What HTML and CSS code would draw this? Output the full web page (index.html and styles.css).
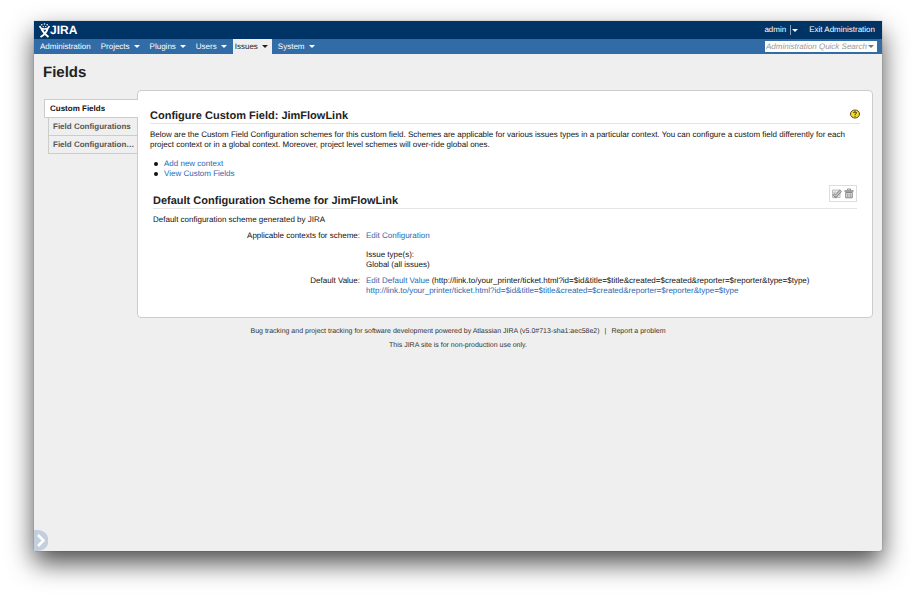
FILE: index.html
```html
<!DOCTYPE html>
<html lang="en">
<head>
<meta charset="utf-8">
<title>Configure Custom Field - JIRA</title>
<link rel="stylesheet" href="styles.css">
</head>
<body>
<div class="window">
  <header>
    <div class="topbar">
      <a class="logo" href="#" aria-label="JIRA">
        <svg class="logo-mark" viewBox="0 0 11 15" aria-hidden="true">
          <g fill="#fff"><circle cx="2.800" cy="1.800" r=".8"/><circle cx="5.500" cy="1" r=".8"/><circle cx="8.200" cy="1.800" r=".8"/><circle cx="4.300" cy="3.600" r=".7"/><circle cx="6.700" cy="3.600" r=".7"/></g>
          <g fill="none" stroke="#fff"><path stroke-width="1.600" d="M.8 2.800C1.200 5.300 3 6 5.500 6S9.800 5.300 10.200 2.800"/><path stroke-width="2" d="M2.500 6C4 9 6 11.500 9.500 14M8.500 6C7.500 9 5 12 1.500 14"/></g>
        </svg>
        <span>JIRA</span>
      </a>
      <div class="user">
        <a href="#">admin</a>
        <button class="user-menu" aria-label="User menu"><i class="caret"></i></button>
        <a class="exit" href="#">Exit Administration</a>
      </div>
    </div>
    <nav class="menu">
      <a href="#">Administration</a>
      <a href="#">Projects <i class="caret"></i></a>
      <a href="#">Plugins <i class="caret"></i></a>
      <a href="#">Users <i class="caret"></i></a>
      <a class="current" href="#">Issues <i class="caret"></i></a>
      <a href="#">System <i class="caret"></i></a>
      <div class="search">
        <input type="text" placeholder="Administration Quick Search" aria-label="Administration Quick Search">
        <i class="caret"></i>
      </div>
    </nav>
  </header>
  <h1>Fields</h1>
  <div class="columns">
    <nav class="tabs">
      <a class="active" href="#">Custom Fields</a>
      <a href="#">Field Configurations</a>
      <a href="#">Field Configuration…</a>
    </nav>
    <main>
      <div class="heading">
        <h2>Configure Custom Field: JimFlowLink</h2>
        <a class="help" href="#" aria-label="Help">
          <svg viewBox="0 0 10 10" aria-hidden="true"><ellipse cx="5" cy="5" rx="4.500" ry="4" fill="#f5dc2c" stroke="#55471c"/><path d="M3.500 4C3.500 2.500 6.500 2.500 6.500 4C6.500 4.800 5 4.800 5 6M5 6.700V7.700" fill="none" stroke="#2c2508"/></svg>
        </a>
      </div>
      <p>Below are the Custom Field Configuration schemes for this custom field. Schemes are applicable for various issues types in a particular context. You can configure a custom field differently for each project context or in a global context. Moreover, project level schemes will over-ride global ones.</p>
      <ul>
        <li><a href="#">Add new context</a></li>
        <li><a href="#">View Custom Fields</a></li>
      </ul>
      <section>
        <div class="heading">
          <h2>Default Configuration Scheme for JimFlowLink</h2>
          <div class="tools">
            <button aria-label="Edit scheme"><svg viewBox="0 0 10 10" aria-hidden="true"><path d="M.5 1.500H8V9H.5Z" fill="#eee" stroke="#bbb"/><path d="M1 4H8M1 6.500H8M3 2V9M5.500 2V9" stroke="#bbb" stroke-width=".6"/><path d="M1.500 5.500L3.500 8L9 2" fill="none" stroke="#888" stroke-width="2.600"/><path d="M2 6L3.500 7.700L8.700 2.300" fill="none" stroke="#eee"/></svg></button>
            <button aria-label="Delete scheme"><svg viewBox="0 0 10 10" aria-hidden="true"><path d="M3.500 1.500V.5H6.500V1.500" fill="none" stroke="#888"/><path d="M.5 2.500H9.500" stroke="#777" stroke-width="1.400"/><path d="M1.700 4H8.300V9.300H1.700Z" fill="#ddd" stroke="#888"/><path d="M3.500 5V8.500M5 5V8.500M6.500 5V8.500" stroke="#888" stroke-width=".6"/></svg></button>
          </div>
        </div>
        <p>Default configuration scheme generated by JIRA</p>
        <dl>
          <dt>Applicable contexts for scheme:</dt>
          <dd><a href="#">Edit Configuration</a>
            <div class="types">Issue type(s):<br>Global (all issues)</div></dd>
          <dt>Default Value:</dt>
          <dd><a href="#">Edit Default Value</a> (http://link.to/your_printer/ticket.html?id=$id&amp;title=$title&amp;created=$created&amp;reporter=$reporter&amp;type=$type)<br>
            <a href="#">http://link.to/your_printer/ticket.html?id=$id&amp;title=$title&amp;created=$created&amp;reporter=$reporter&amp;type=$type</a></dd>
        </dl>
      </section>
    </main>
  </div>
  <footer>
    <div>Bug tracking and project tracking for software development powered by Atlassian JIRA (v5.0#713-sha1:aec58e2)<span class="bar">|</span><a href="#">Report a problem</a></div>
    <div>This JIRA site is for non-production use only.</div>
  </footer>
  <button class="expand" aria-label="Expand"><svg viewBox="0 0 14 21" aria-hidden="true"><path d="M0 0H4A10.500 10.500 0 0 1 4 21H0Z" fill="#c3cfdd"/><path d="M4 5L9.500 10.500L4 16" fill="none" stroke="#fff" stroke-width="2.500"/></svg></button>
</div>
</body>
</html>
```

FILE: styles.css
```css
* { box-sizing: border-box; }

body {
  margin: 0;
  min-height: 100vh;
  padding: 21px 34px 47px;
  display: flex;
  background: #fff;
  color: #111;
  font: 8px/10px "Liberation Sans", Arial, sans-serif;
  text-rendering: geometricPrecision;
}

a { color: #2a68af; text-decoration: none; }
button { padding: 0; border: 0; background: none; color: inherit; font: inherit; }
svg { display: block; }
h1, h2, p, ul, dl, dd { margin: 0; }

.window {
  position: relative;
  flex: 1;
  min-width: 0;
  background: #efefef;
  border-radius: 0 0 2px 2px;
  box-shadow: 0 0 1px rgba(0, 0, 0, .6), 0 12px 26px rgba(0, 0, 0, .7);
}

.caret {
  display: inline-block;
  border: 3px solid transparent;
  border-top-color: currentColor;
  border-bottom: 0;
}

.topbar {
  display: flex;
  align-items: center;
  justify-content: space-between;
  height: 18px;
  padding: 0 7px 0 5px;
  background: #036;
  color: #fff;
}
.topbar a { color: #fff; }
.logo { display: flex; align-items: center; font-size: 12px; font-weight: bold; line-height: 16px; }
.logo-mark { width: 11px; height: 15px; }
.user { display: flex; align-items: center; }
.user-menu { display: flex; align-items: center; height: 10px; margin-left: 4px; padding-left: 1px; border-left: 1px solid #8aa2bd; }
.exit { margin-left: 11px; }

.menu { display: flex; height: 15px; padding: 0 5px 0 2px; background: #326ca6; }
.menu a { display: flex; align-items: center; gap: 4px; padding: 0 4px; margin-right: 2px; color: #fff; }
.menu .current { padding: 0 4px 0 2px; background: #efefef; color: #222; }
.search {
  display: flex;
  align-items: center;
  align-self: center;
  width: 112px;
  height: 11px;
  margin-left: auto;
  padding: 0 3px 0 1px;
  background: #fff;
  color: #777;
}
.search input { flex: 1; min-width: 0; padding: 0; border: 0; outline: 0; background: none; font: inherit; font-style: italic; text-rendering: geometricPrecision; }
.search input::placeholder { color: #999; }

h1, h2 { color: #222; }
h1 { padding: 9px 9px 0; font-size: 15px; line-height: 20px; }

.columns { display: flex; align-items: flex-start; padding: 7px 9px 0 10px; }
.tabs { position: relative; z-index: 1; flex: none; width: 94px; padding-top: 9px; }
.tabs a {
  display: block;
  margin-left: 4px;
  padding: 4px 4px 3px;
  border: 1px solid #ccc;
  border-top: 0;
  color: #555;
  font-weight: bold;
  white-space: nowrap;
}
.tabs .active { margin-left: 0; padding: 4px 5px 3px; border-top: 1px solid #ccc; border-right: 0; background: #fff; color: #111; }

main {
  flex: 1;
  min-width: 0;
  margin-left: -1px;
  padding: 18px 12px 21px;
  background: #fff;
  border: 1px solid #ccc;
  border-radius: 4px;
}
.heading { display: flex; align-items: flex-end; justify-content: space-between; border-bottom: 1px solid #e4e4e4; }
h2 { font-size: 11px; line-height: 13px; }
.help svg { width: 10px; height: 10px; }
.help { padding-bottom: 4px; }
main > p { padding-top: 6px; }
ul { padding: 9px 0 0 4px; list-style: none; }
li { display: flex; align-items: center; gap: 6px; }
li::before { content: ""; width: 4px; height: 4px; border-radius: 50%; background: #111; }
section { padding: 6px 3px 0; }
.tools { display: flex; gap: 2px; margin-bottom: 6px; padding: 2px; border: 1px solid #ddd; }
.tools svg { width: 10px; height: 11px; }
section p { padding-top: 6px; }
dl { display: grid; grid-template-columns: 207px 1fr; gap: 6px; padding-top: 6px; }
dt { text-align: right; }
.types { padding-top: 9px; }

footer { padding-top: 9px; color: #333; font-size: 7px; text-align: center; }
footer div { padding-bottom: 4px; }
footer a { color: #333; }
.bar { margin: 0 5px; }

.expand { position: absolute; left: 0; bottom: 0; }
.expand svg { width: 14px; height: 21px; }
```
